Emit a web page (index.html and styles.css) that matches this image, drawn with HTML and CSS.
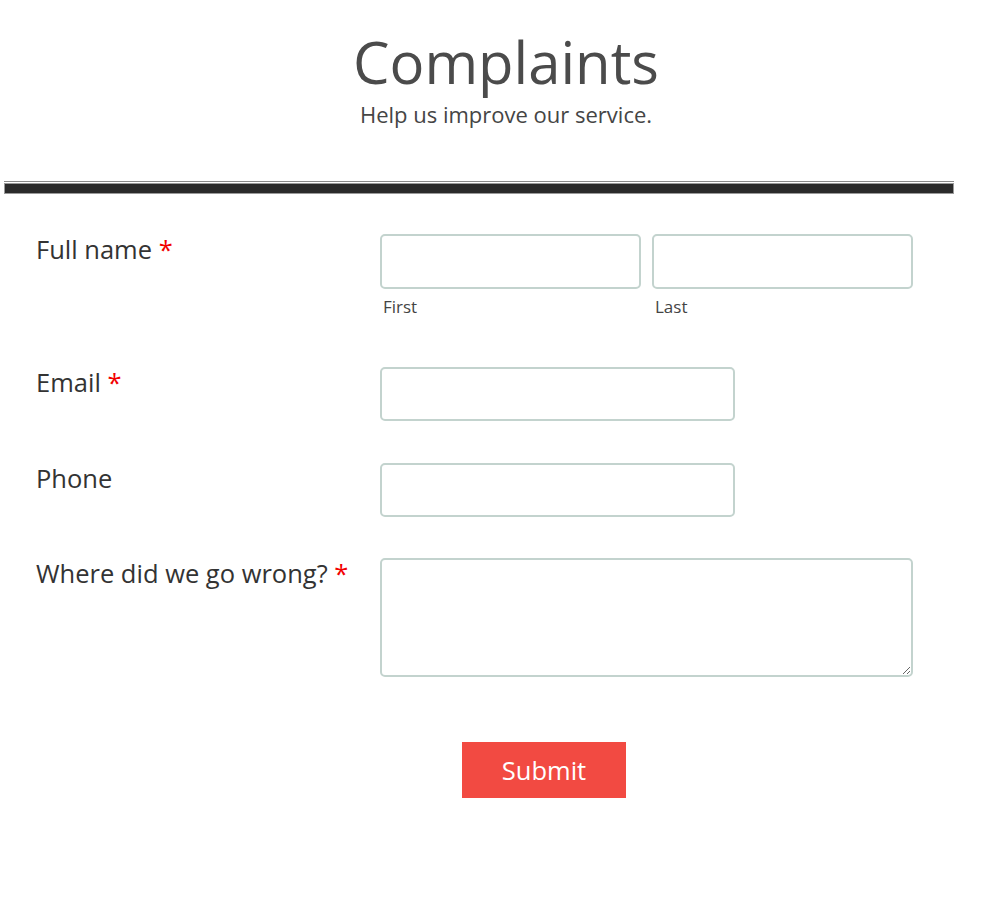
FILE: index.html
```html
<!DOCTYPE html>
<html>
<head>
<meta charset="utf-8">
<link rel="stylesheet" href="styles.css">
</head>
<body>
<div class="page">
  <header class="header">
    <h1 class="title">Complaints</h1>
    <p class="subtitle">Help us improve our service.</p>
  </header>
  <div class="divider"><div class="divider-thin"></div><div class="divider-thick"></div></div>
  <form class="form">
    <div class="row row-name">
      <label class="label">Full name <span class="req">*</span></label>
      <div class="name-fields">
        <div class="sub">
          <input class="input" type="text">
          <span class="sublabel">First</span>
        </div>
        <div class="sub">
          <input class="input" type="text">
          <span class="sublabel">Last</span>
        </div>
      </div>
    </div>
    <div class="row row-email">
      <label class="label">Email <span class="req">*</span></label>
      <input class="input input-mid" type="text">
    </div>
    <div class="row row-phone">
      <label class="label">Phone</label>
      <input class="input input-mid" type="text">
    </div>
    <div class="row row-text">
      <label class="label">Where did we go wrong? <span class="req">*</span></label>
      <textarea class="textarea"></textarea>
    </div>
    <div class="actions">
      <button class="submit" type="button">Submit</button>
    </div>
  </form>
</div>
</body>
</html>
```

FILE: styles.css
```css
* { box-sizing: border-box; }
html, body { margin: 0; padding: 0; background: #fff; }
body { font-family: "Open Sans", "Noto Sans", sans-serif; color: #333; }
.page { width: 958px; padding-left: 4px; }
.header { text-align: center; padding-left: 50px; padding-top: 22px; height: 181px; }
.title { margin: 0; font-size: 58px; font-weight: 400; line-height: 80px; color: #4b4b4b; }
.subtitle { margin: 0; font-size: 22px; line-height: 24px; color: #454545; }
.divider { width: 950px; }
.divider-thin { height: 1px; background: #8a8a8a; margin-bottom: 1px; }
.divider-thick { height: 11px; background: #2b2b2b; border: 1px solid #9a9a9a; }
.form { padding-left: 32px; padding-top: 40px; }
.row { display: flex; align-items: flex-start; }
.label { width: 344px; flex: none; font-size: 25.5px; line-height: 30px; color: #333; }
.req { color: #f20000; }
.name-fields { display: flex; gap: 11px; }
.sub { display: flex; flex-direction: column; }
.sublabel { font-size: 17px; line-height: 22px; color: #444; padding-left: 3px; margin-top: 7px; }
.input { width: 261px; height: 55px; border: 2px solid #c3d3ce; border-radius: 5px; font: inherit; padding: 0 10px; background: #fff; }
.input-mid { width: 355px; height: 54px; }
.row-email { margin-top: 49px; }
.row-phone { margin-top: 42px; }
.row-text { margin-top: 41px; }
.textarea { width: 533px; height: 119px; border: 2px solid #c3d3ce; border-radius: 5px; font: inherit; padding: 10px; display: block; margin: 0; }
.actions { padding-left: 426px; margin-top: 65px; }
.submit { width: 164px; height: 56px; border: none; background: #f24a42; color: #fff; font-family: inherit; font-size: 25.5px; padding: 0; cursor: pointer; }
```
